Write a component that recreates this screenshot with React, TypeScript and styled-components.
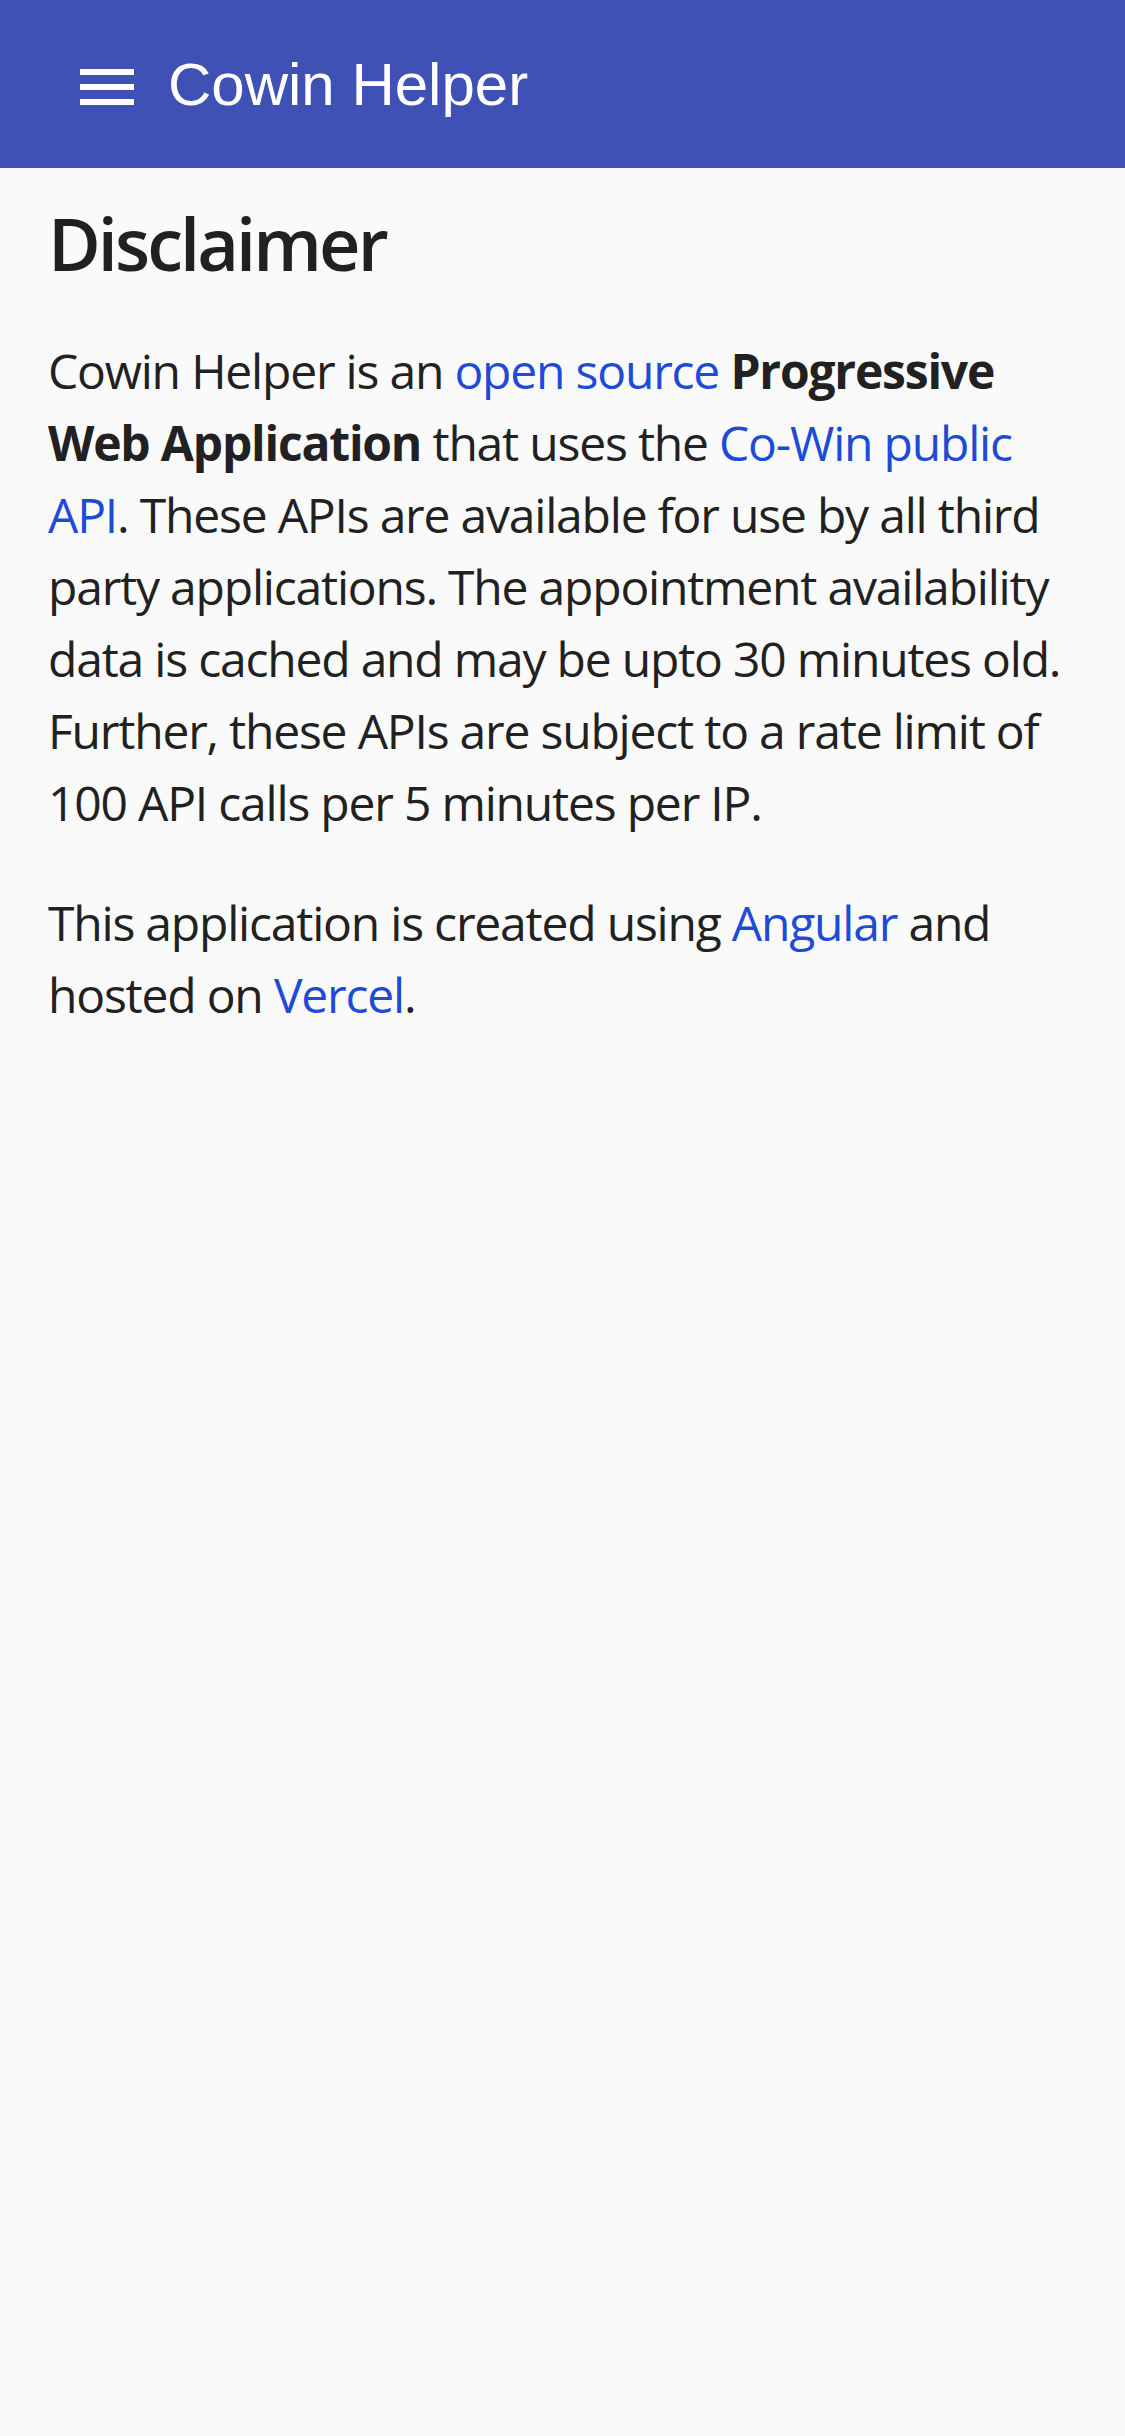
import React from "react";
import styled, { createGlobalStyle } from "styled-components";

const GlobalStyle = createGlobalStyle`
  html, body {
    margin: 0;
    padding: 0;
    background: #fafafa;
  }
  body {
    min-height: 2436px;
    font-family: "Open Sans", "Noto Sans", sans-serif;
    color: #212121;
  }
`;

const Page = styled.div`
  display: flex;
  flex-direction: column;
  min-height: 2436px;
  background: #fafafa;
`;

const Toolbar = styled.header`
  display: flex;
  align-items: center;
  height: 168px;
  padding-left: 71px;
  gap: 25px;
  background: #3f51b5;
  color: #ffffff;
`;

const MenuButton = styled.button`
  display: flex;
  align-items: center;
  justify-content: center;
  width: 72px;
  height: 72px;
  padding: 0;
  border: none;
  background: transparent;
  color: #ffffff;
  cursor: pointer;
`;

const Title = styled.span`
  font-family: "Liberation Sans", Arial, sans-serif;
  font-size: 60px;
  font-weight: 400;
  line-height: normal;
`;

const Content = styled.main`
  display: flex;
  flex-direction: column;
  padding: 0 48px;
`;

const Heading = styled.h2`
  margin: 32px 0 49px;
  font-family: "Open Sans", "Noto Sans", sans-serif;
  font-size: 72px;
  font-weight: 600;
  line-height: 86px;
  letter-spacing: -2.9px;
  color: #212121;
`;

const Paragraph = styled.p`
  margin: 0 0 48px;
  font-size: 48px;
  line-height: 72px;
  letter-spacing: -1.2px;
  color: #212121;
`;

const Link = styled.a`
  color: #1e4bd6;
  text-decoration: none;
`;

const Strong = styled.strong`
  font-weight: 700;
`;

const MenuIcon = () => (
  <svg width="72" height="72" viewBox="0 0 24 24" aria-hidden="true">
    <rect x="3" y="7" width="18" height="2" fill="currentColor" />
    <rect x="3" y="12" width="18" height="2" fill="currentColor" />
    <rect x="3" y="17" width="18" height="2" fill="currentColor" />
  </svg>
);

export default function App() {
  return (
    <>
      <GlobalStyle />
      <Page>
        <Toolbar>
          <MenuButton aria-label="Menu">
            <MenuIcon />
          </MenuButton>
          <Title>Cowin Helper</Title>
        </Toolbar>
        <Content>
          <Heading>Disclaimer</Heading>
          <Paragraph>
            Cowin Helper is an <Link href="#">open source</Link>{" "}
            <Strong>Progressive Web Application</Strong> that uses the{" "}
            <Link href="#">Co-Win public API</Link>. These APIs are available
            for use by all third party applications. The appointment
            availability data is cached and may be upto 30 minutes old.
            Further, these APIs are subject to a rate limit of 100 API calls
            per 5 minutes per IP.
          </Paragraph>
          <Paragraph>
            This application is created using <Link href="#">Angular</Link> and
            hosted on <Link href="#">Vercel</Link>.
          </Paragraph>
        </Content>
      </Page>
    </>
  );
}
